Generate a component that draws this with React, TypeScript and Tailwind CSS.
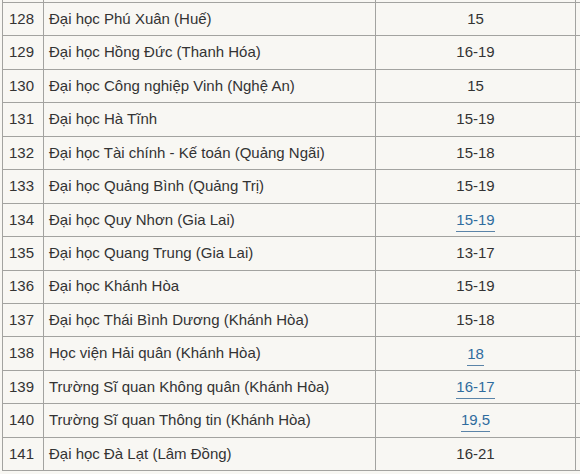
const ROWS: { n: number; name: string; score: string; link?: boolean }[] = [
  { n: 128, name: "Đại học Phú Xuân (Huế)", score: "15" },
  { n: 129, name: "Đại học Hồng Đức (Thanh Hóa)", score: "16-19" },
  { n: 130, name: "Đại học Công nghiệp Vinh (Nghệ An)", score: "15" },
  { n: 131, name: "Đại học Hà Tĩnh", score: "15-19" },
  { n: 132, name: "Đại học Tài chính - Kế toán (Quảng Ngãi)", score: "15-18" },
  { n: 133, name: "Đại học Quảng Bình (Quảng Trị)", score: "15-19" },
  { n: 134, name: "Đại học Quy Nhơn (Gia Lai)", score: "15-19", link: true },
  { n: 135, name: "Đại học Quang Trung (Gia Lai)", score: "13-17" },
  { n: 136, name: "Đại học Khánh Hòa", score: "15-19" },
  { n: 137, name: "Đại học Thái Bình Dương (Khánh Hòa)", score: "15-18" },
  { n: 138, name: "Học viện Hải quân (Khánh Hòa)", score: "18", link: true },
  { n: 139, name: "Trường Sĩ quan Không quân (Khánh Hòa)", score: "16-17", link: true },
  { n: 140, name: "Trường Sĩ quan Thông tin (Khánh Hòa)", score: "19,5", link: true },
  { n: 141, name: "Đại học Đà Lạt (Lâm Đồng)", score: "16-21" },
];

const GRID = "grid grid-cols-[41px_332px_201px]";

export default function App() {
  return (
    <div
      className="h-[474px] w-[580px] overflow-hidden bg-[#f8f7f3] pl-[2px] text-[15px] text-[#333333]"
      style={{ fontFamily: '"Liberation Sans", Arial, sans-serif' }}
    >
      {/* sliver of the row above */}
      <div className={`${GRID} h-[3px] border-b border-[#a3a3a0]`}>
        <div className="border-l border-[#a3a3a0]" />
        <div className="border-l border-[#a3a3a0]" />
        <div className="border-x border-[#a3a3a0]" />
      </div>
      {ROWS.map((r) => (
        <div
          key={r.n}
          className={`${GRID} h-[33.45px] border-b border-[#a3a3a0]`}
        >
          <div className="flex items-center border-l border-[#a3a3a0] pl-[6px]">
            {r.n}
          </div>
          <div className="flex items-center border-l border-[#a3a3a0] pl-[5px]">
            {r.name}
          </div>
          <div className="flex items-center justify-center border-x border-[#a3a3a0]">
            {r.link ? (
              <a
                href="#"
                className="mt-[3px] border-b border-[#5b84a8] pb-[3px] leading-[17px] text-[#2f6c9e]"
              >
                {r.score}
              </a>
            ) : (
              r.score
            )}
          </div>
        </div>
      ))}
    </div>
  );
}
